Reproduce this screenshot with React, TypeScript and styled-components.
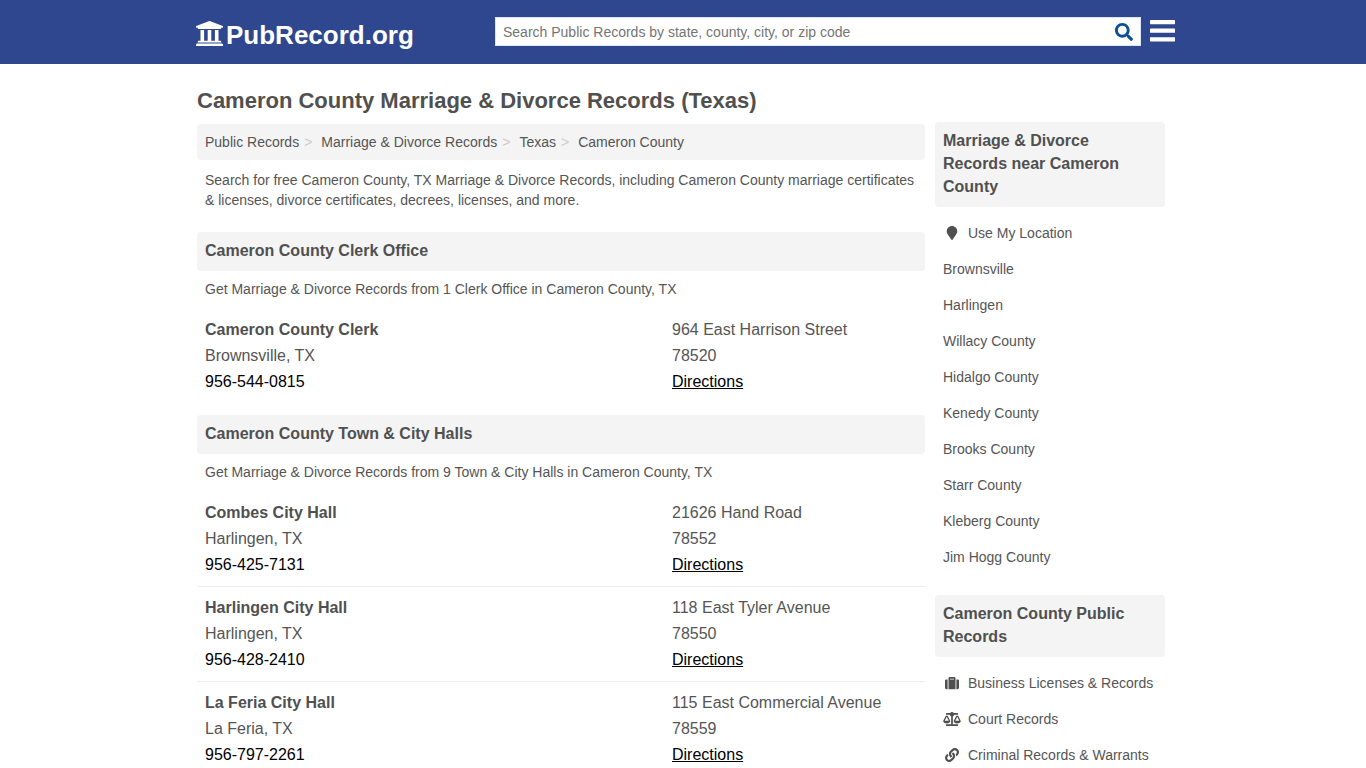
import React from "react";
import styled, { createGlobalStyle } from "styled-components";
import { FaBalanceScale, FaLink, FaMapMarker, FaSearch, FaSuitcase } from "react-icons/fa";

const GlobalStyle = createGlobalStyle`
  *, *::before, *::after { box-sizing: border-box; }
  body {
    margin: 0;
    background: #fff;
    color: #555;
    font: 14px/20px "Liberation Sans", Arial, Helvetica, sans-serif;
  }
  h1, h2, h3, p, ul, ol { margin: 0; padding: 0; }
  ul, ol { list-style: none; }
  a { color: inherit; text-decoration: none; }
`;

const Header = styled.header`
  background: #2e478f;
`;

const HeaderInner = styled.div`
  display: flex;
  align-items: center;
  max-width: 984px;
  height: 64px;
  margin: 0 auto;
  padding: 0 0 1px 4px;
`;

const Logo = styled.a`
  display: flex;
  flex: 0 0 300px;
  align-items: flex-start;
  gap: 3px;
  padding: 7px 0 0 1px;
  color: #fff;
  font-size: 26px;
  font-weight: bold;
  line-height: 30px;

  svg {
    width: 27px;
    height: 27px;
    fill: currentColor;
  }
`;

const SearchForm = styled.form`
  display: flex;
  flex: 1;
  height: 29px;
  background: #fff;
  border: 1px solid #dbe6f8;
`;

const SearchInput = styled.input`
  flex: 1;
  min-width: 0;
  padding: 0 7px;
  border: 0;
  background: transparent;
  color: #555;
  font: inherit;
  outline: 0;

  &::placeholder {
    color: #757575;
  }
`;

const SearchButton = styled.button`
  display: flex;
  align-items: center;
  padding: 0 7px;
  border: 0;
  background: transparent;
  color: #0b4f94;
  font-size: 18px;
  cursor: pointer;
`;

const MenuButton = styled.button`
  display: flex;
  margin-left: 9px;
  padding: 0;
  border: 0;
  background: transparent;
  color: #fff;
  cursor: pointer;

  svg {
    width: 25px;
    height: 23px;
    fill: currentColor;
  }
`;

const Page = styled.div`
  display: grid;
  grid-template-columns: minmax(0, 1fr) 230px;
  column-gap: 10px;
  align-items: start;
  max-width: 972px;
  margin: 0 auto;
  padding: 22px 4px 0 0;
`;

const PageTitle = styled.h1`
  margin-bottom: 8px;
  color: #505050;
  font-size: 22px;
  line-height: 30px;
`;

const Breadcrumb = styled.ol`
  display: flex;
  padding: 8px;
  border-radius: 4px;
  background: #f4f4f4;
`;

const Crumb = styled.li`
  & + &::before {
    content: ">";
    padding: 0 9px 0 5px;
    color: #ccc;
  }
`;

const Intro = styled.p`
  padding: 10px 8px 22px;
`;

const BarHeading = styled.h2`
  padding: 7px 8px 9px;
  border-radius: 4px;
  background: #f4f4f4;
  color: #505050;
  font-size: 16px;
  line-height: 23px;
`;

const Section = styled.section`
  margin-bottom: 12px;
`;

const Summary = styled.p`
  padding: 8px 8px 10px;
`;

const Office = styled.li`
  display: grid;
  grid-template-columns: minmax(0, 1fr) 245px;
  padding: 8px;
  font-size: 16px;
  line-height: 26px;

  & + & {
    border-top: 1px solid #eee;
  }
`;

const OfficeColumn = styled.div`
  display: flex;
  flex-direction: column;
  align-items: flex-start;
`;

const OfficeName = styled.a`
  color: #505050;
  font-weight: bold;
`;

const ActionLink = styled.a<{ $underline?: boolean }>`
  color: #000;
  text-decoration: ${(p) => (p.$underline ? "underline" : "none")};
`;

const Sidebar = styled.aside`
  padding-top: 36px;
`;

const SideList = styled.ul`
  padding: 8px 0 20px;
`;

const SideLink = styled.a`
  display: flex;
  align-items: center;
  gap: 7px;
  padding: 8px;
  white-space: nowrap;
`;

const SideIcon = styled.span`
  display: flex;
  width: 18px;
  color: #505050;

  svg {
    width: 18px;
    height: 14px;
  }
`;

type OfficeData = {
  name: string;
  city: string;
  phone: string;
  street: string;
  zip: string;
};

const sections: { title: string; summary: string; offices: OfficeData[] }[] = [
  {
    title: "Cameron County Clerk Office",
    summary: "Get Marriage & Divorce Records from 1 Clerk Office in Cameron County, TX",
    offices: [
      { name: "Cameron County Clerk", city: "Brownsville, TX", phone: "956-544-0815", street: "964 East Harrison Street", zip: "78520" },
    ],
  },
  {
    title: "Cameron County Town & City Halls",
    summary: "Get Marriage & Divorce Records from 9 Town & City Halls in Cameron County, TX",
    offices: [
      { name: "Combes City Hall", city: "Harlingen, TX", phone: "956-425-7131", street: "21626 Hand Road", zip: "78552" },
      { name: "Harlingen City Hall", city: "Harlingen, TX", phone: "956-428-2410", street: "118 East Tyler Avenue", zip: "78550" },
      { name: "La Feria City Hall", city: "La Feria, TX", phone: "956-797-2261", street: "115 East Commercial Avenue", zip: "78559" },
    ],
  },
];

const crumbs = ["Public Records", "Marriage & Divorce Records", "Texas", "Cameron County"];

type SideItem = { label: string; icon?: React.ReactNode };

const nearby: SideItem[] = [
  { label: "Use My Location", icon: <FaMapMarker /> },
  { label: "Brownsville" },
  { label: "Harlingen" },
  { label: "Willacy County" },
  { label: "Hidalgo County" },
  { label: "Kenedy County" },
  { label: "Brooks County" },
  { label: "Starr County" },
  { label: "Kleberg County" },
  { label: "Jim Hogg County" },
];

const publicRecords: SideItem[] = [
  { label: "Business Licenses & Records", icon: <FaSuitcase /> },
  { label: "Court Records", icon: <FaBalanceScale /> },
  { label: "Criminal Records & Warrants", icon: <FaLink /> },
];

function CourthouseIcon() {
  return (
    <svg viewBox="16 32 480 448" aria-hidden="true">
      <path d="M496 128v16a8 8 0 0 1-8 8h-24v12c0 6.627-5.373 12-12 12H60c-6.627 0-12-5.373-12-12v-12H24a8 8 0 0 1-8-8v-16a8 8 0 0 1 4.941-7.392l232-88a7.996 7.996 0 0 1 6.118 0l232 88A8 8 0 0 1 496 128z" />
      <path d="M96 192v192H60c-6.627 0-12 5.373-12 12v20h416v-20c0-6.627-5.373-12-12-12h-36V192h-64v192h-64V192h-64v192h-64V192H96z" />
      <path d="M472 432H40c-13.255 0-24 10.745-24 24v16a8 8 0 0 0 8 8h464a8 8 0 0 0 8-8v-16c0-13.255-10.745-24-24-24z" />
    </svg>
  );
}

function MenuIcon() {
  return (
    <svg viewBox="0 0 25 23" aria-hidden="true">
      <rect y="0" width="25" height="4.2" rx="0.4" />
      <rect y="8.6" width="25" height="4.2" rx="0.4" />
      <rect y="17.2" width="25" height="4.2" rx="0.4" />
    </svg>
  );
}

function SideGroup({ title, items }: { title: string; items: SideItem[] }) {
  return (
    <nav aria-label={title}>
      <BarHeading>{title}</BarHeading>
      <SideList>
        {items.map((item) => (
          <li key={item.label}>
            <SideLink href="#">
              {item.icon && <SideIcon>{item.icon}</SideIcon>}
              {item.label}
            </SideLink>
          </li>
        ))}
      </SideList>
    </nav>
  );
}

export default function App() {
  return (
    <>
      <GlobalStyle />
      <Header>
        <HeaderInner>
          <Logo href="#">
            <CourthouseIcon />
            PubRecord.org
          </Logo>
          <SearchForm role="search" onSubmit={(e) => e.preventDefault()}>
            <SearchInput
              type="text"
              aria-label="Search Public Records"
              placeholder="Search Public Records by state, county, city, or zip code"
            />
            <SearchButton type="submit" aria-label="Search">
              <FaSearch />
            </SearchButton>
          </SearchForm>
          <MenuButton type="button" aria-label="Menu">
            <MenuIcon />
          </MenuButton>
        </HeaderInner>
      </Header>
      <Page>
        <main>
          <PageTitle>Cameron County Marriage &amp; Divorce Records (Texas)</PageTitle>
          <Breadcrumb>
            {crumbs.map((c) => (
              <Crumb key={c}>
                <a href="#">{c}</a>
              </Crumb>
            ))}
          </Breadcrumb>
          <Intro>
            Search for free Cameron County, TX Marriage &amp; Divorce Records, including Cameron
            County marriage certificates &amp; licenses, divorce certificates, decrees, licenses, and
            more.
          </Intro>
          {sections.map((s) => (
            <Section key={s.title}>
              <BarHeading>{s.title}</BarHeading>
              <Summary>{s.summary}</Summary>
              <ul>
                {s.offices.map((o) => (
                  <Office key={o.name}>
                    <OfficeColumn>
                      <OfficeName href="#">{o.name}</OfficeName>
                      <span>{o.city}</span>
                      <ActionLink href="#">{o.phone}</ActionLink>
                    </OfficeColumn>
                    <OfficeColumn>
                      <span>{o.street}</span>
                      <span>{o.zip}</span>
                      <ActionLink href="#" $underline>
                        Directions
                      </ActionLink>
                    </OfficeColumn>
                  </Office>
                ))}
              </ul>
            </Section>
          ))}
        </main>
        <Sidebar>
          <SideGroup title="Marriage & Divorce Records near Cameron County" items={nearby} />
          <SideGroup title="Cameron County Public Records" items={publicRecords} />
        </Sidebar>
      </Page>
    </>
  );
}
